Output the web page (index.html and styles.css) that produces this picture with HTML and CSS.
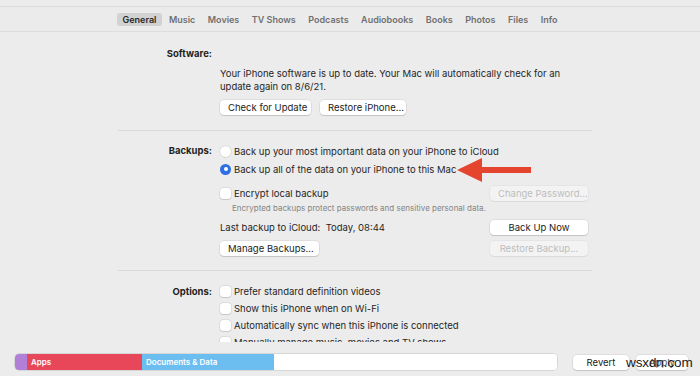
FILE: index.html
```html
<!DOCTYPE html>
<html lang="en">
<head>
<meta charset="utf-8">
<title>iPhone – General</title>
<link rel="stylesheet" href="styles.css">
</head>
<body>
<div class="window">
  <nav class="tabs">
    <span class="tab active">General</span>
    <span class="tab">Music</span>
    <span class="tab">Movies</span>
    <span class="tab">TV Shows</span>
    <span class="tab">Podcasts</span>
    <span class="tab">Audiobooks</span>
    <span class="tab">Books</span>
    <span class="tab">Photos</span>
    <span class="tab">Files</span>
    <span class="tab">Info</span>
  </nav>

  <main class="main">
    <div class="inner">
      <section class="sec software">
        <div class="label">Software:</div>
        <div class="content">
          <p class="desc">Your iPhone software is up to date. Your Mac will automatically check for an<br>update again on 8/6/21.</p>
          <div class="btnrow">
            <button class="btn w-check">Check for Update</button>
            <button class="btn w-restore">Restore iPhone...</button>
          </div>
        </div>
      </section>

      <hr class="sep">

      <section class="sec backups">
        <div class="label">Backups:</div>
        <div class="content">
          <div class="opt"><span class="radio"></span>Back up your most important data on your iPhone to iCloud</div>
          <div class="opt"><span class="radio on"></span>Back up all of the data on your iPhone to this Mac</div>
          <div class="split encrypt">
            <div class="opt"><span class="check"></span>Encrypt local backup</div>
            <button class="btn side disabled">Change Password...</button>
          </div>
          <p class="note">Encrypted backups protect passwords and sensitive personal data.</p>
          <div class="split last">
            <span>Last backup to iCloud:&nbsp; Today, 08:44</span>
            <button class="btn side">Back Up Now</button>
          </div>
          <div class="split manage">
            <button class="btn w-manage">Manage Backups...</button>
            <button class="btn side disabled">Restore Backup...</button>
          </div>
        </div>
      </section>

      <hr class="sep sep2">

      <section class="sec options">
        <div class="label">Options:</div>
        <div class="content">
          <div class="opt o-row"><span class="check"></span>Prefer standard definition videos</div>
          <div class="opt o-row"><span class="check"></span>Show this iPhone when on Wi-Fi</div>
          <div class="opt o-row"><span class="check"></span>Automatically sync when this iPhone is connected</div>
          <div class="opt o-row"><span class="check"></span>Manually manage music, movies and TV shows</div>
        </div>
      </section>
    </div>
  </main>

  <footer class="bottom">
    <div class="storage">
      <span class="seg s-other"></span>
      <span class="seg s-apps">Apps</span>
      <span class="seg s-docs">Documents &amp; Data</span>
      <span class="seg s-free"></span>
    </div>
    <button class="btn w-revert">Revert</button>
    <button class="btn w-apply">Apply</button>
  </footer>

  <svg class="arrow" width="80" height="30" viewBox="0 0 80 30" aria-hidden="true">
    <polygon points="2,15 27,3 27,12 76,12 76,18 27,18 27,27" fill="#e5452f"/>
  </svg>
  <div class="watermark">wsxdn.com</div>
</div>
</body>
</html>
```

FILE: styles.css
```css
* { box-sizing: border-box; }

html, body {
  margin: 0;
  padding: 0;
}

body {
  background: #ececec;
  font-family: Inter, "Noto Sans", "Liberation Sans", sans-serif;
  font-size: 9.5px;
  color: #262626;
}

.window {
  position: relative;
  width: 700px;
  height: 376px;
  overflow: hidden;
  background: #ececec;
}

/* Tabs */
.tabs {
  margin-top: 6px;
  height: 26px;
  border-top: 1px solid #dddddd;
  border-bottom: 1px solid #dddddd;
  background: #ebebeb;
  display: flex;
  align-items: center;
  padding-left: 117px;
  gap: 1.5px;
}

.tab {
  padding: 0 5.5px;
  height: 13px;
  line-height: 13px;
  font-size: 9px;
  font-weight: 600;
  color: #707070;
  border-radius: 3px;
}

.tab.active {
  background: #d2d2d2;
  color: #2a2a2a;
}

/* Main */
.main {
  height: 310px;
  overflow: hidden;
}

.inner {
  margin-left: 118px;
  width: 474px;
}

.sec {
  display: grid;
  grid-template-columns: 94px 1fr;
  column-gap: 8px;
}

.label {
  text-align: right;
  font-weight: 700;
  color: #1e1e1e;
  line-height: 13px;
}

.content {
  padding-right: 4px;
}

.software {
  padding-top: 15px;
}

.software .content {
  grid-column: 2;
  grid-row: 2;
  padding-top: 7px;
}

.desc {
  margin: 0;
  line-height: 13px;
}

.btnrow {
  display: flex;
  gap: 9px;
  margin-top: 7px;
}

.btn {
  font: inherit;
  color: #222;
  background: #fff;
  border: none;
  border-radius: 4px;
  height: 15px;
  padding: 0 8px;
  line-height: 15px;
  box-shadow: 0 0 0 0.5px rgba(0, 0, 0, 0.12), 0 1px 1px rgba(0, 0, 0, 0.12);
  white-space: nowrap;
}

.btn.disabled {
  background: #f3f3f3;
  color: #bdbdbd;
  box-shadow: 0 0 0 0.5px rgba(0, 0, 0, 0.06), 0 1px 1px rgba(0, 0, 0, 0.05);
}

.w-check { width: 91px; }
.w-restore { width: 86px; }
.w-manage { width: 99px; }
.side { width: 98px; }

.sep {
  border: none;
  border-top: 1px solid #d9d9d9;
  margin: 15px 0 0;
  height: 0;
}

.backups {
  padding-top: 11px;
}

.backups .label {
  line-height: 18px;
}

.opt {
  display: flex;
  align-items: center;
  height: 18px;
  gap: 3px;
}

.radio {
  width: 11px;
  height: 11px;
  border-radius: 50%;
  background: #fff;
  box-shadow: 0 0 0 0.5px rgba(0, 0, 0, 0.12), 0 0.5px 1px rgba(0, 0, 0, 0.1);
  flex: none;
}

.radio.on {
  background: #2f6fe4;
  box-shadow: none;
  position: relative;
}

.radio.on::after {
  content: "";
  position: absolute;
  left: 3.5px;
  top: 3.5px;
  width: 4px;
  height: 4px;
  border-radius: 50%;
  background: #fff;
}

.check {
  width: 11px;
  height: 11px;
  border-radius: 3px;
  background: #fff;
  box-shadow: 0 0 0 0.5px rgba(0, 0, 0, 0.12), 0 0.5px 1px rgba(0, 0, 0, 0.1);
  flex: none;
}

.split {
  display: flex;
  justify-content: space-between;
  align-items: center;
}

.encrypt {
  margin-top: 6px;
}

.note {
  margin: 0;
  padding-left: 12px;
  font-size: 8px;
  line-height: 12px;
  color: #858585;
}

.last {
  margin-top: 5px;
  height: 16px;
}

.manage {
  margin-top: 5px;
  height: 16px;
}

.sep2 {
  margin-top: 14px;
}

.options {
  padding-top: 12px;
}

.options .label {
  line-height: 17px;
}

.o-row {
  height: 17px;
}

/* Bottom bar */
.bottom {
  height: 34px;
  display: flex;
  align-items: flex-start;
  padding: 12px 0 0 15px;
  background: #ececec;
}

.storage {
  width: 542px;
  height: 16px;
  display: flex;
  border-radius: 4px;
  overflow: hidden;
  background: #fff;
  box-shadow: 0 0 0 0.5px rgba(0, 0, 0, 0.18);
}

.seg {
  height: 100%;
  font-size: 8px;
  font-weight: 600;
  line-height: 16px;
  color: #fff;
  padding-left: 4px;
  white-space: nowrap;
}

.s-other { width: 12px; background: #b27fd6; padding: 0; }
.s-apps { width: 115px; background: #e8475a; }
.s-docs { width: 132px; background: #6cbdf0; }
.s-free { flex: 1; background: #fff; }

.w-revert {
  width: 56px;
  margin-left: 16px;
  margin-top: 1px;
}

.w-apply {
  width: 52px;
  margin-left: 7px;
  margin-top: 1px;
  color: #555;
}

/* Overlays */
.arrow {
  position: absolute;
  left: 455px;
  top: 155px;
}

.watermark {
  position: absolute;
  z-index: 2;
  left: 626px;
  top: 355px;
  font-family: "Liberation Sans", Arial, sans-serif;
  font-size: 13.5px;
  color: #1a1a1a;
  letter-spacing: -0.1px;
}
```
